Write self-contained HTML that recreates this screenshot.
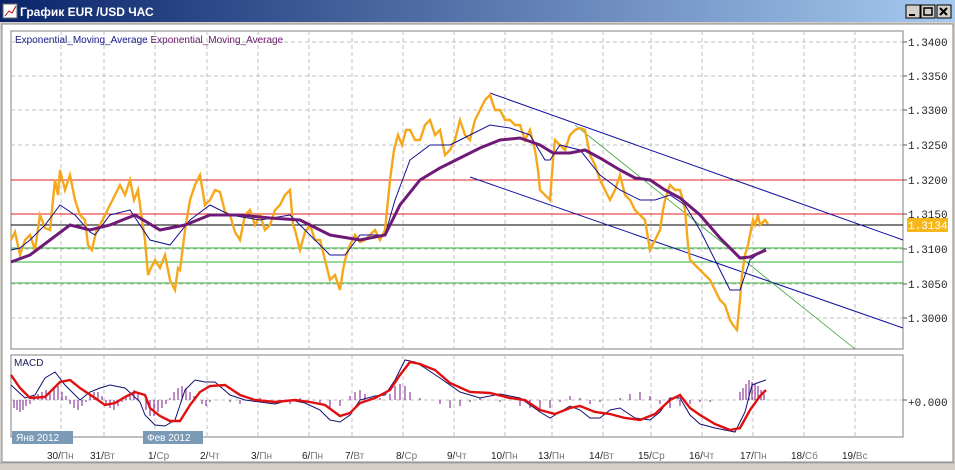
<!DOCTYPE html>
<html><head><meta charset="utf-8"><style>
body{margin:0;width:955px;height:470px;overflow:hidden;background:#d4d0c8;font-family:"Liberation Sans",sans-serif}
</style></head><body>
<svg width="955" height="470" xmlns="http://www.w3.org/2000/svg" style="display:block">
<defs><linearGradient id="tb" x1="0" x2="1"><stop offset="0" stop-color="#0a246a"/><stop offset="1" stop-color="#a6caf0"/></linearGradient></defs>
<rect x="0" y="0" width="955" height="470" fill="#d4d0c8"/>
<rect x="0" y="0" width="955" height="22" fill="url(#tb)"/>
<rect x="3" y="4" width="14" height="14" fill="#fff" stroke="#666"/>
<path d="M5 16 L9 11 L12 13 L16 6" stroke="#c00" fill="none"/>
<text x="20" y="16" fill="#fff" font-weight="bold" font-size="12" font-family="Liberation Sans, sans-serif">График EUR /USD  ЧАС</text>
<g stroke="#000" fill="#d4d0c8"><rect x="906" y="5" width="14" height="13"/><rect x="921" y="5" width="14" height="13"/><rect x="937" y="5" width="14" height="13"/></g>
<path d="M909 15 h6" stroke="#000" stroke-width="2"/><rect x="924" y="8" width="8" height="7" fill="none" stroke="#000" stroke-width="1.5"/><path d="M940 8 l7 7 M947 8 l-7 7" stroke="#000" stroke-width="2"/>
<rect x="2" y="24" width="951" height="438" fill="#fff" stroke="#888"/>
<rect x="11" y="31" width="892" height="318" fill="#fff" stroke="#808080"/>
<rect x="11" y="355" width="892" height="82" fill="#fff" stroke="#808080"/>
<g stroke="#c0c0c0" stroke-dasharray="4,3" fill="none">
<path d="M11 42H903M11 76H903M11 110H903M11 145H903M11 180H903M11 214H903M11 249H903M11 284H903M11 318H903M11 400H903"/>
<path d="M61 31V349M104 31V349M155 31V349M207 31V349M258 31V349M309 31V349M352 31V349M403 31V349M454 31V349M505 31V349M552 31V349M603 31V349M651 31V349M702 31V349M753 31V349M804 31V349M855 31V349"/>
<path d="M61 355V437M104 355V437M155 355V437M207 355V437M258 355V437M309 355V437M352 355V437M403 355V437M454 355V437M505 355V437M552 355V437M603 355V437M651 355V437M702 355V437M753 355V437M804 355V437M855 355V437"/>
</g>
<g font-family="Liberation Mono, monospace" font-size="11" fill="#222">
<text x="908" y="46">1.3400</text><text x="908" y="80">1.3350</text><text x="908" y="114">1.3300</text><text x="908" y="149">1.3250</text><text x="908" y="184">1.3200</text><text x="908" y="218">1.3150</text><text x="908" y="253">1.3100</text><text x="908" y="288">1.3050</text><text x="908" y="322">1.3000</text>
<text x="908" y="406">+0.000</text>
</g>
<path d="M903 42h4M903 76h4M903 110h4M903 145h4M903 180h4M903 214h4M903 249h4M903 284h4M903 318h4M903 400h4" stroke="#555"/>
<rect x="907" y="218" width="41" height="14" fill="#f5b71c"/>
<text x="908" y="229" font-family="Liberation Mono, monospace" font-size="11" fill="#fff">1.3134</text>
<text x="15" y="43" font-size="10" fill="#1a1a8c" font-family="Liberation Sans, sans-serif">Exponential_Moving_Average <tspan fill="#6a1a6a">Exponential_Moving_Average</tspan></text>
<text x="14" y="366" font-size="10" fill="#1a1a5c">MACD</text>
<g stroke-width="1" fill="none">
<path d="M11 180H903M11 214H903" stroke="#e02020"/>
<path d="M11 225H903" stroke="#000"/>
<path d="M11 248H903M11 262H903M11 283H903" stroke="#30b030"/>
<path d="M490 93L903 240M470 177L903 328" stroke="#1010a0"/>
<path d="M575 125L855 349" stroke="#30a030" stroke-width="0.8"/>
</g>
<polyline fill="none" stroke="#f5a81c" stroke-width="2.4" points="11,240 15,232 20,255 25,240 30,235 35,250 40,215 45,228 50,230 55,180 58,195 60,170 65,190 70,175 75,200 80,215 85,220 88,245 92,250 96,232 100,225 105,215 110,205 115,195 120,185 125,195 130,180 134,200 138,190 142,220 145,240 148,275 150,270 155,260 160,268 165,255 170,280 175,290 178,268 180,270 185,230 190,200 195,185 200,175 205,205 210,200 215,190 220,192 225,212 230,215 235,232 240,240 245,215 250,210 255,225 260,215 265,230 270,225 275,210 280,205 285,195 290,190 293,225 295,230 300,250 305,232 310,225 315,240 320,240 325,260 330,280 335,275 340,290 343,270 345,260 350,245 355,235 360,242 365,240 370,235 375,230 380,240 385,230 388,200 390,180 394,150 398,135 402,145 406,130 410,130 415,140 420,140 425,125 430,120 435,135 440,130 445,155 450,150 455,140 460,120 465,135 470,140 475,120 480,110 485,100 490,95 495,110 500,110 505,120 510,120 515,125 520,125 525,140 530,130 535,150 538,170 540,190 545,195 550,200 553,160 555,140 560,145 565,150 570,135 575,130 580,128 585,130 590,155 595,165 600,180 605,190 610,200 615,190 620,175 625,195 630,200 635,210 640,215 645,220 650,250 655,240 660,230 663,210 665,200 670,185 675,190 680,190 683,200 685,210 688,245 690,260 695,265 700,270 705,275 710,280 715,290 720,300 725,305 730,320 733,325 737,330 740,300 742,275 745,255 748,245 750,235 753,220 755,225 758,215 760,225 765,220 768,224"/>
<polyline fill="none" stroke="#101090" stroke-width="1" points="11,250 20,248 30,240 45,225 60,205 75,215 90,232 95,235 110,215 130,210 150,240 170,245 190,220 210,205 230,215 260,220 290,215 310,235 330,255 345,255 360,235 385,235 395,200 410,160 430,145 450,145 470,135 490,125 510,128 530,135 545,160 550,160 560,145 580,150 600,175 620,190 640,200 655,200 670,195 685,205 700,230 715,260 730,290 740,290 750,260 766,248"/>
<polyline fill="none" stroke="#701a78" stroke-width="3" points="11,262 30,255 50,240 70,225 90,230 110,225 135,215 160,230 185,225 210,215 240,215 270,218 300,220 330,235 360,240 385,235 400,205 420,180 440,168 460,158 480,148 500,140 520,138 540,145 553,153 570,153 585,150 600,158 620,170 635,178 650,180 665,190 680,198 700,215 720,238 740,258 750,257 766,250"/>
<g stroke="#7a1a88" stroke-width="1">
<path d="M14 400V408M17 400V410M20 400V412M23 400V410M26 400V406M30 400V404M34 400V396M38 400V394M42 400V392M46 400V390M50 400V392M54 400V388M58 400V386M62 400V392M66 400V396M70 400V404M74 400V408M78 400V410M82 400V406M86 400V402M90 400V396M94 400V392M98 400V392M102 400V396M106 400V404M110 400V408M114 400V410M118 400V406M122 400V402M126 400V398M130 400V394M134 400V390M138 400V394M142 400V400M146 400V410M150 400V416M154 400V416M158 400V412M162 400V408M166 400V404M170 400V398M174 400V392M178 400V388M182 400V386M186 400V388M190 400V392M194 400V396M198 400V400M202 400V404M206 400V406M210 400V402M230 400V402M240 400V404M260 400V398M280 400V402M290 400V404M300 400V398M320 400V404M330 400V408M340 400V406M350 400V396M355 400V392M360 400V390M365 400V394M370 400V398M380 400V398M390 400V394M395 400V386M400 400V384M405 400V386M410 400V392M420 400V398M440 400V404M450 400V408M460 400V406M470 400V402M480 400V398M500 400V402M520 400V406M530 400V408M540 400V410M550 400V408M560 400V402M570 400V396M580 400V398M590 400V404M600 400V402M620 400V398M630 400V394M640 400V392M650 400V396M660 400V404M670 400V408M680 400V406M690 400V404M700 400V402M710 400V402M720 400V400M740 400V392M743 400V388M746 400V384M749 400V380M752 400V382M755 400V384M758 400V386M761 400V390M764 400V394"/>
</g>
<polyline fill="none" stroke="#101070" stroke-width="1" points="11,385 25,398 35,395 45,378 55,372 65,385 80,400 90,392 100,388 110,385 125,388 140,402 145,415 155,425 165,426 175,420 185,390 195,380 205,382 215,382 230,395 245,400 260,402 275,404 290,400 305,403 320,410 330,420 340,422 350,415 360,400 375,396 385,395 395,380 405,360 415,362 425,368 440,378 460,392 480,398 500,394 520,398 540,412 550,418 560,412 570,406 580,410 590,418 600,418 610,410 620,408 635,418 650,420 660,412 670,398 680,398 690,415 700,424 715,428 735,432 745,412 752,385 760,382 766,380"/>
<polyline fill="none" stroke="#e01010" stroke-width="2.4" points="11,375 20,388 30,398 45,397 60,382 70,380 80,388 95,398 105,405 115,403 125,397 135,392 145,395 150,408 160,416 170,421 180,421 190,405 200,392 210,386 225,385 240,395 255,400 275,402 295,400 310,402 325,405 340,416 350,413 360,403 375,398 390,390 400,375 410,362 420,364 435,370 450,383 470,392 490,393 510,398 525,400 540,410 555,414 570,408 580,406 595,412 610,414 625,418 640,420 655,414 670,400 680,395 690,408 700,415 715,424 730,430 740,428 750,410 760,396 766,390"/>
<rect x="12" y="431" width="61" height="13" fill="#7a9ab6"/>
<rect x="143" y="431" width="60" height="13" fill="#7a9ab6"/>
<text x="16" y="441" font-size="10" fill="#fff" font-family="Liberation Sans, sans-serif">Янв 2012</text>
<text x="147" y="441" font-size="10" fill="#fff" font-family="Liberation Sans, sans-serif">Фев 2012</text>
<g font-size="10" fill="#222" font-family="Liberation Sans, sans-serif">
<text x="47" y="459">30/<tspan fill="#777">Пн</tspan></text><text x="90" y="459">31/<tspan fill="#777">Вт</tspan></text><text x="148" y="459">1/<tspan fill="#777">Ср</tspan></text><text x="200" y="459">2/<tspan fill="#777">Чт</tspan></text><text x="251" y="459">3/<tspan fill="#777">Пн</tspan></text><text x="302" y="459">6/<tspan fill="#777">Пн</tspan></text><text x="345" y="459">7/<tspan fill="#777">Вт</tspan></text><text x="396" y="459">8/<tspan fill="#777">Ср</tspan></text><text x="447" y="459">9/<tspan fill="#777">Чт</tspan></text><text x="491" y="459">10/<tspan fill="#777">Пн</tspan></text><text x="538" y="459">13/<tspan fill="#777">Пн</tspan></text><text x="589" y="459">14/<tspan fill="#777">Вт</tspan></text><text x="638" y="459">15/<tspan fill="#777">Ср</tspan></text><text x="689" y="459">16/<tspan fill="#777">Чт</tspan></text><text x="740" y="459">17/<tspan fill="#777">Пн</tspan></text><text x="791" y="459">18/<tspan fill="#777">Сб</tspan></text><text x="842" y="459">19/<tspan fill="#777">Вс</tspan></text>
</g>
<rect x="0" y="463" width="955" height="7" fill="#d4d0c8"/>
<path d="M0 463H955" stroke="#aaa"/>
</svg>
</body></html>
